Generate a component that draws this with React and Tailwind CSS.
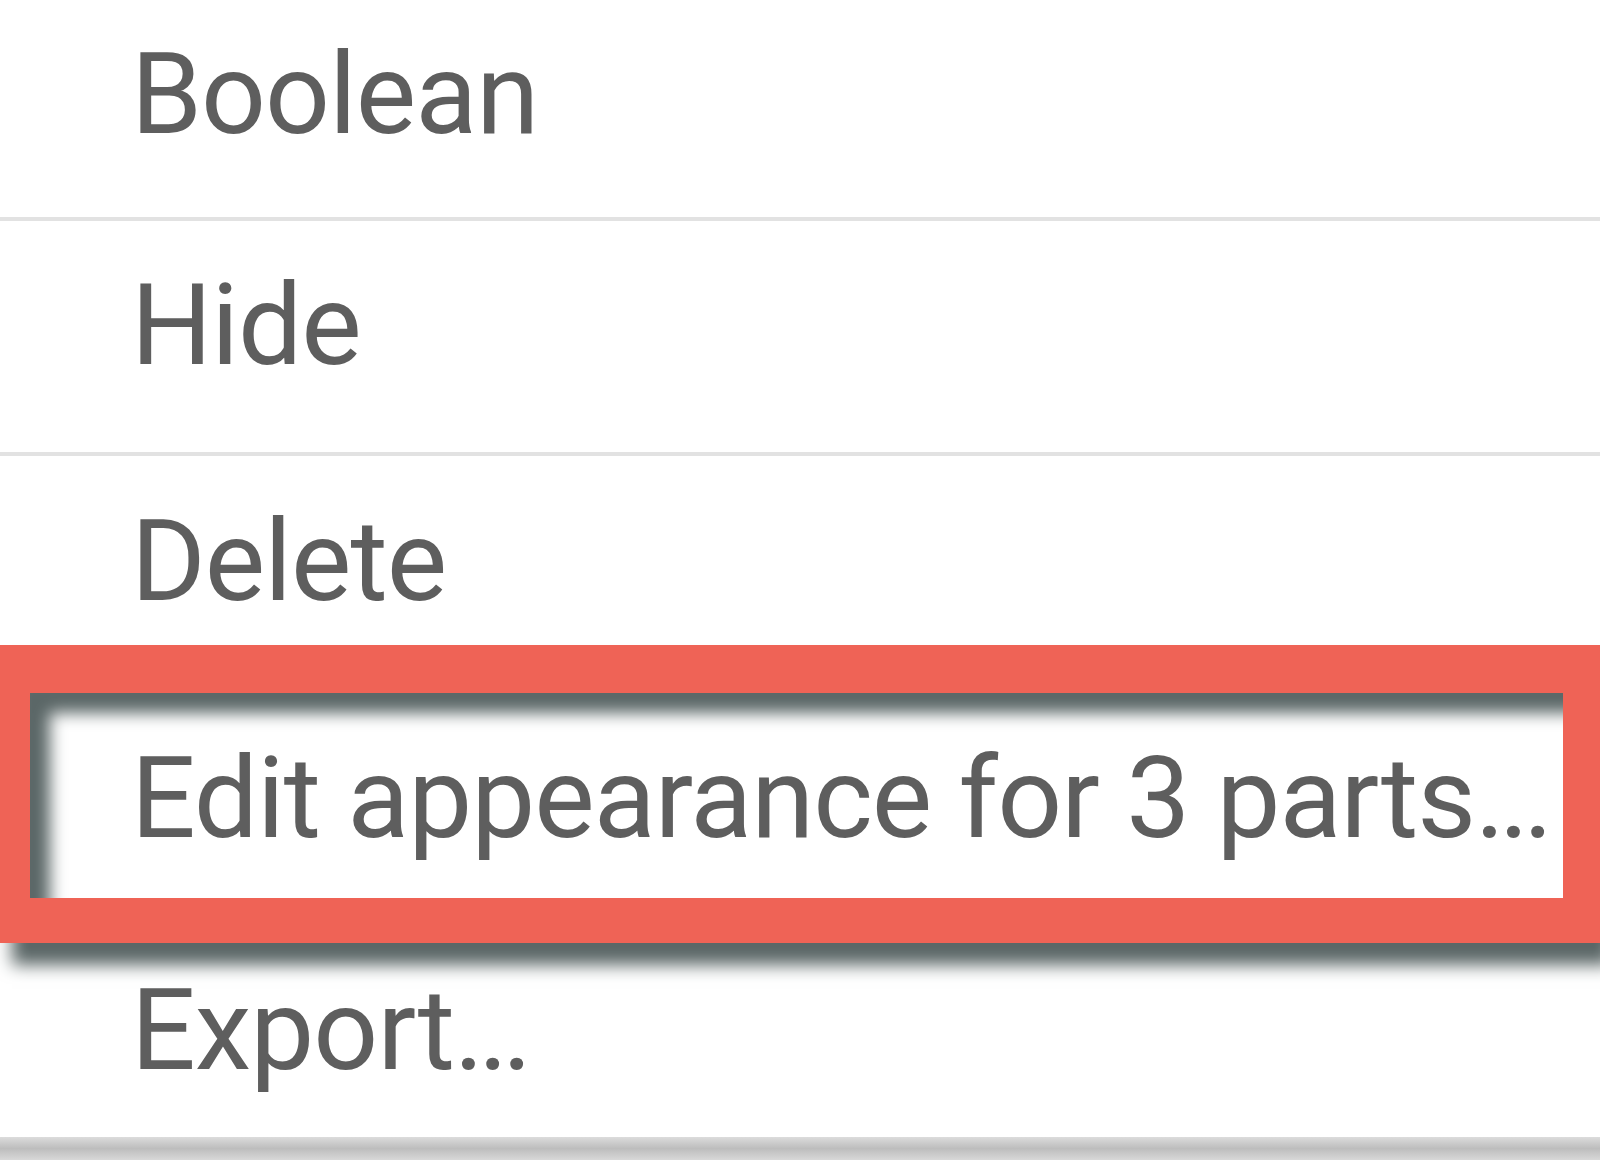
import React from 'react';

const App = () => {
  return (
    <div className="w-[1600px] h-[1160px] overflow-hidden bg-white text-[#5e5e5e] font-['Roboto',sans-serif] text-[114px] leading-none tracking-[-1px]">
      {/* plain rows */}
      <div className="h-[217px] pl-[131px] pt-[37px]">Boolean</div>
      <div className="h-[4px] bg-[#e2e2e2]" />
      <div className="h-[231px] pl-[131px] pt-[47px]">Hide</div>
      <div className="h-[4px] bg-[#e2e2e2]" />
      <div className="h-[189px] pl-[131px] pt-[48px]">Delete</div>

      {/* highlighted row */}
      <div className="h-[298px] bg-[#ef6356] pt-[48px] pl-[30px] pr-[37px] pb-[45px] shadow-[12px_22px_16px_#5b6767]">
        <div className="h-[205px] bg-white pl-[101px] pt-[48px] whitespace-nowrap shadow-[inset_20px_20px_16px_#5b6767]">
          Edit appearance for 3 parts<span className="tracking-[-6px]">...</span>
        </div>
      </div>

      <div className="h-[194px] pl-[131px] pt-[30px]">
        Export<span className="tracking-[-6px]">...</span>
      </div>
      <div className="h-[23px] bg-gradient-to-b from-[#dcdcdc] via-[#bdbdbd] to-[#d8d8d8]" />
    </div>
  );
};

export default App;
